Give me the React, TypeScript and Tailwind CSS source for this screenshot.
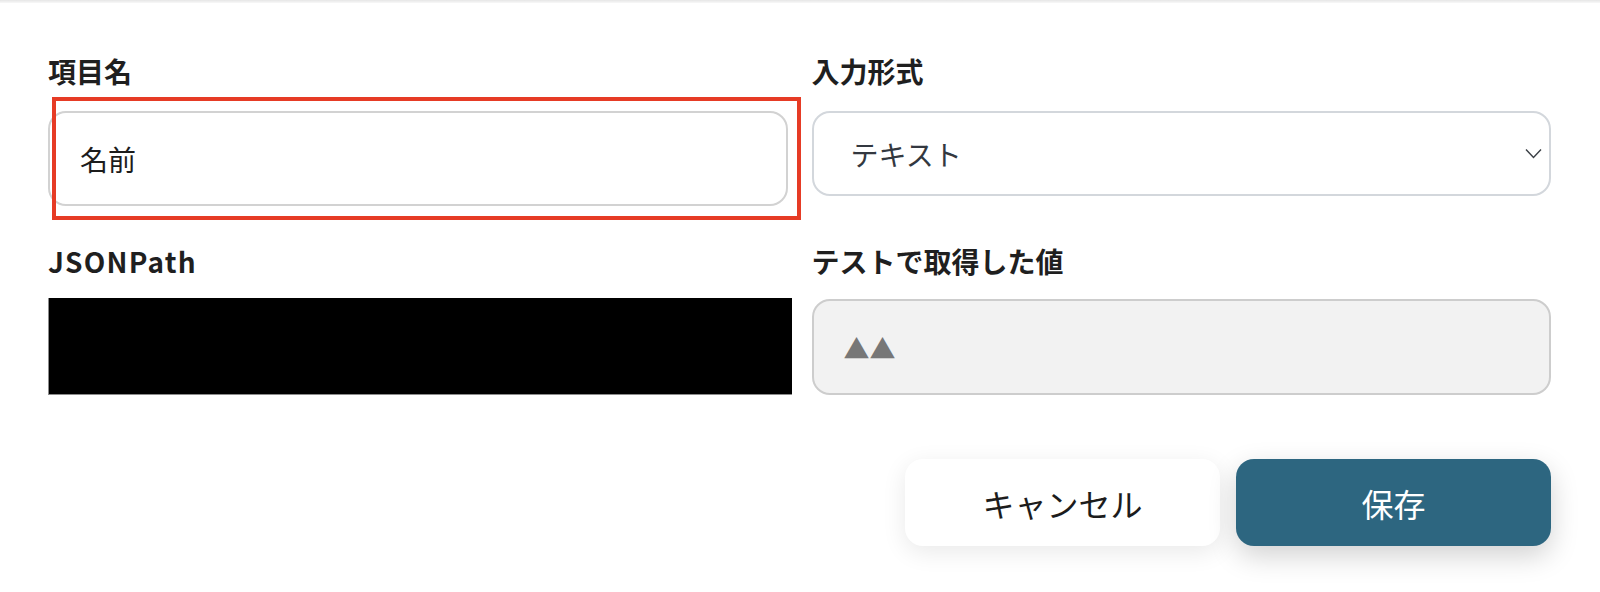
import React from "react";

const font = { fontFamily: '"Noto Sans CJK JP", "Noto Sans", sans-serif' };

function Label({ children, className = "" }: { children: React.ReactNode; className?: string }) {
  return (
    <div className={"text-[28px] leading-[40px] font-bold text-[#1f1f1f] " + className}>{children}</div>
  );
}

export default function App() {
  return (
    <div
      className="relative w-full h-[592px] bg-white overflow-hidden"
      style={font}
    >
      <div className="h-[3px] bg-linear-to-b from-[#e6e6e6] to-[#f8f8f8]" />
      <div className="pl-12 pr-[49px] pt-[48px]">
        <div className="grid grid-cols-2 gap-x-6">
          <div>
            <Label>項目名</Label>
            <div className="mt-5 h-[95px] rounded-[18px] border-2 border-[#d2d2d2] bg-white flex items-center pl-[30px] text-[28px] text-[#1c1c1c]">
              名前
            </div>
          </div>
          <div>
            <Label>入力形式</Label>
            <div className="mt-5 h-[85px] rounded-[18px] border-2 border-[#d3d7dc] bg-white flex items-center justify-between pl-[37px] pr-[7px] text-[28px] text-[#333840]">
              <span>テキスト</span>
              <svg width="17" height="11" viewBox="0 0 17 11" fill="none">
                <path d="M1 1.5 L8.5 9.5 L16 1.5" stroke="#3a3f45" strokeWidth="1.4" />
              </svg>
            </div>
          </div>
        </div>
        <div className="grid grid-cols-2 gap-x-6 mt-[35px]">
          <div>
            <Label className="tracking-[1.2px]">JSONPath</Label>
            <div className="mt-[17px] h-[97px] w-[744px] bg-black border-l border-b border-[#8c8c8c]" />
          </div>
          <div>
            <Label>テストで取得した値</Label>
            <div className="mt-[18px] h-[96px] rounded-[18px] border-2 border-[#cdcdcd] bg-[#f2f2f2] flex items-center pl-[30px] text-[26px] text-[#777777]">
              ▲▲
            </div>
          </div>
        </div>
        <div className="flex justify-end gap-4 mt-[64px]">
          <button className="w-[315px] h-[87px] rounded-[18px] bg-white shadow-[0_6px_24px_rgba(0,0,0,0.09)] text-[32px] text-[#1c1c1c] flex items-center justify-center">
            キャンセル
          </button>
          <button className="w-[315px] h-[87px] rounded-[18px] bg-[#2d6680] shadow-[0_10px_28px_rgba(0,0,0,0.18)] text-[32px] text-white flex items-center justify-center">
            保存
          </button>
        </div>
      </div>
      <div className="absolute left-[52px] top-[97px] w-[749px] h-[123px] border-4 border-[#e63b25] pointer-events-none" />
    </div>
  );
}
